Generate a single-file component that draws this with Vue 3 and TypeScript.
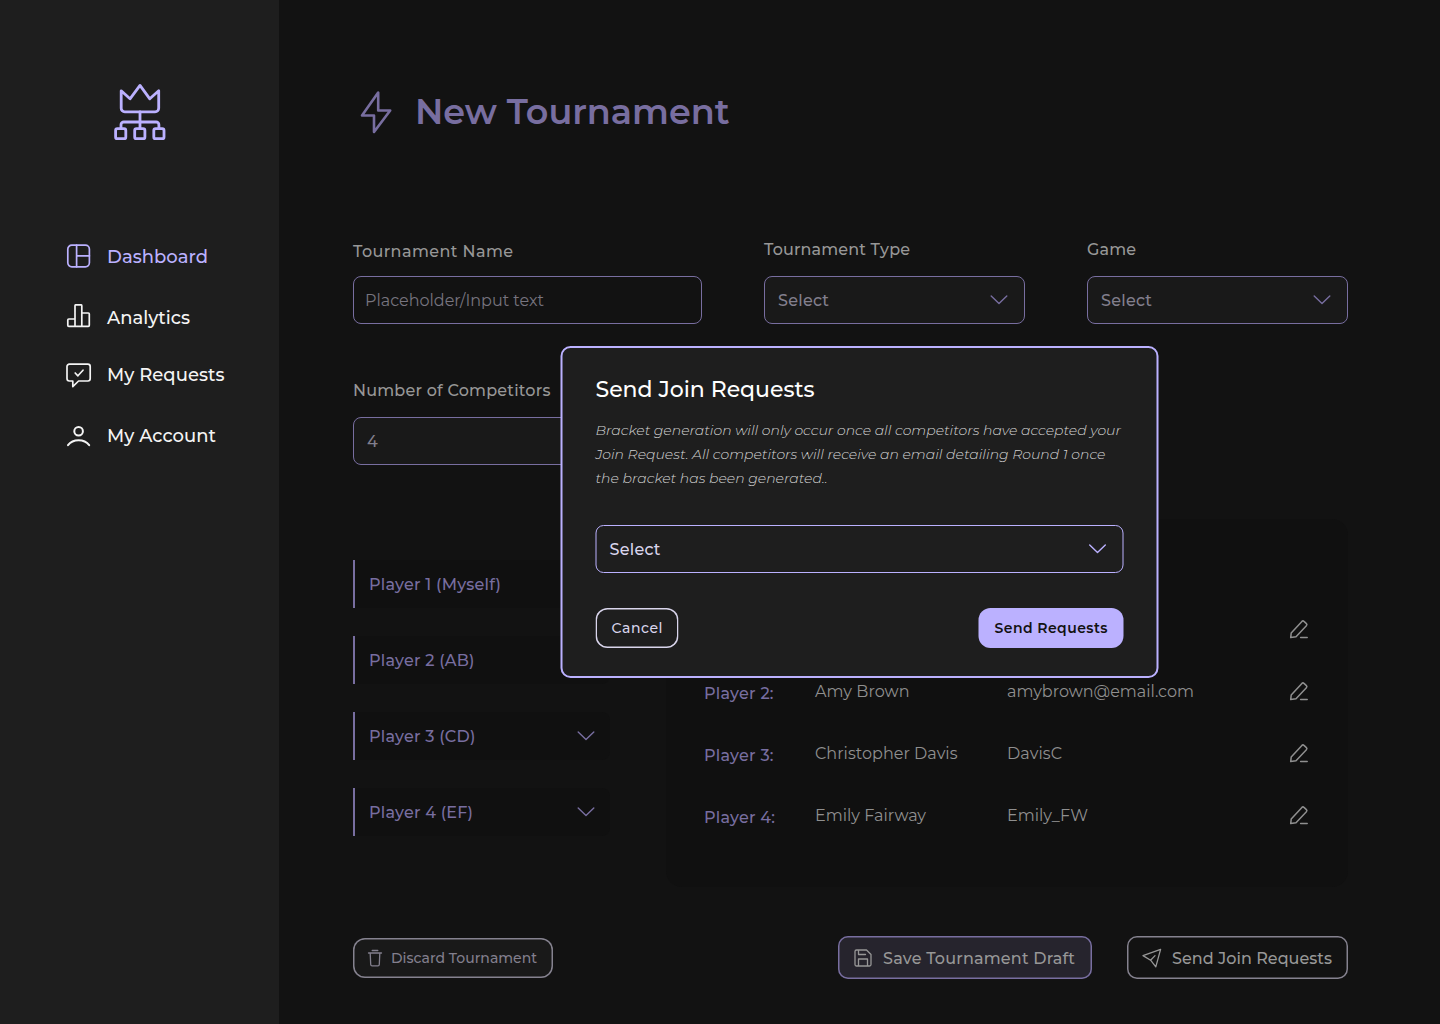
<script setup lang="ts">
import type { Directive } from 'vue'

interface Player {
  tab: string
  tabWidth: number
  label: string
  labelWidth: number
  name: string
  nameWidth: number
  contact: string
  contactWidth: number
}

const nav = [
  { id: 'dashboard', text: 'Dashboard', width: 101 },
  { id: 'analytics', text: 'Analytics', width: 83 },
  { id: 'requests', text: 'My Requests', width: 117.5 },
  { id: 'account', text: 'My Account', width: 109 },
]

const players: Player[] = [
  { tab: 'Player 1 (Myself)', tabWidth: 132, label: 'Player 1:', labelWidth: 67, name: '', nameWidth: 0, contact: '', contactWidth: 0 },
  { tab: 'Player 2 (AB)', tabWidth: 105.5, label: 'Player 2:', labelWidth: 69.5, name: 'Amy Brown', nameWidth: 94.5, contact: 'amybrown@email.com', contactWidth: 187 },
  { tab: 'Player 3 (CD)', tabWidth: 106.5, label: 'Player 3:', labelWidth: 69.5, name: 'Christopher Davis', nameWidth: 142.5, contact: 'DavisC', contactWidth: 55 },
  { tab: 'Player 4 (EF)', tabWidth: 104, label: 'Player 4:', labelWidth: 71, name: 'Emily Fairway', nameWidth: 111, contact: 'Emily_FW', contactWidth: 81 },
]

const note = [
  { text: 'Bracket generation will only occur once all competitors have accepted your', width: 525.5 },
  { text: 'Join Request. All competitors will receive an email detailing Round 1 once', width: 510 },
  { text: 'the bracket has been generated..', width: 232 },
]

/* Tracks a single line of text out to the given width in pixels. */
const vTrack: Directive<HTMLElement, number> = {
  mounted(el, { value }) {
    const length = (el.textContent ?? '').trim().length
    if (!value || length < 2) return
    const range = document.createRange()
    range.selectNodeContents(el)
    const natural = range.getBoundingClientRect().width
    el.style.letterSpacing = `${((value - natural) / (length - 1)).toFixed(3)}px`
  },
}
</script>

<template>
  <div class="app">
    <aside class="sidebar">
      <svg class="logo" viewBox="0 0 60 64" fill="none" stroke="currentColor" stroke-width="2.8" stroke-linejoin="round" stroke-linecap="round">
        <path d="M11.2 10.8 20 18.8 30 5.400 39.800 18.800 48.700 10.800V28.200a3.600 3.600 0 0 1-3.600 3.600H14.800a3.600 3.600 0 0 1-3.600-3.600Z" />
        <path d="M30 31.800V48M11 48v-3.200a2.800 2.800 0 0 1 2.800-2.800h32.300a2.800 2.800 0 0 1 2.800 2.800V48" />
        <rect x="5.600" y="48.700" width="10.200" height="10" rx="1.800" />
        <rect x="24.700" y="48.700" width="10.200" height="10" rx="1.800" />
        <rect x="43.800" y="48.700" width="10.200" height="10" rx="1.800" />
      </svg>
      <nav class="nav">
        <a v-for="item in nav" :key="item.id" class="nav-item" :class="item.id">
          <svg viewBox="0 0 28 28" fill="none" stroke="currentColor" stroke-width="1.700" stroke-linejoin="round" stroke-linecap="round">
            <template v-if="item.id === 'dashboard'">
              <rect x="3.800" y="2.200" width="21.600" height="21.600" rx="4" />
              <path d="M12.600 2.200v21.600M12.600 12.800h12.800" />
            </template>
            <path v-else-if="item.id === 'analytics'" d="M11 22.300V1.800a1 1 0 0 1 1-1h4.800a1 1 0 0 1 1 1v20.500M11 15H4.800a1 1 0 0 0-1 1v5.300a1 1 0 0 0 1 1h19.500a1 1 0 0 0 1-1V10a1 1 0 0 0-1-1h-6.500" />
            <template v-else-if="item.id === 'requests'">
              <path d="M5.400 3.200h18.400a2.400 2.400 0 0 1 2.400 2.400v12a2.400 2.400 0 0 1-2.400 2.400h-9.200L8.800 25.600V20H5.400A2.400 2.400 0 0 1 3 17.600V5.600A2.400 2.400 0 0 1 5.400 3.200Z" />
              <path d="m11.200 12 2.700 2.800L19 9.200" />
            </template>
            <template v-else>
              <circle cx="14.600" cy="9.200" r="4.300" stroke-width="2" />
              <path d="M4 23.200c5-6.600 16.200-6.600 21.200 0" stroke-width="2" />
            </template>
          </svg>
          <span v-track="item.width">{{ item.text }}</span>
        </a>
      </nav>
    </aside>

    <main class="main">
      <header class="heading">
        <svg viewBox="0 0 40 52" fill="none" stroke="currentColor" stroke-width="2.600" stroke-linejoin="round">
          <path d="M22.200 6.500v18h12L18 46V29.500H6L22.200 6.500Z" />
        </svg>
        <h1 v-track="314.5">New Tournament</h1>
      </header>

      <section class="fields">
        <label class="field lower">
          <span v-track="160" class="caption">Tournament Name</span>
          <span class="control plain"><span v-track="179">Placeholder/Input text</span></span>
        </label>
        <label class="field">
          <span v-track="146" class="caption">Tournament Type</span>
          <span class="control">
            <span v-track="51">Select</span>
            <svg class="chevron" viewBox="0 0 18 10"><path d="m1.200 1 7.800 7.600L16.800 1" /></svg>
          </span>
        </label>
        <label class="field">
          <span v-track="49" class="caption">Game</span>
          <span class="control">
            <span v-track="51">Select</span>
            <svg class="chevron" viewBox="0 0 18 10"><path d="m1.200 1 7.800 7.600L16.800 1" /></svg>
          </span>
        </label>
        <label class="field">
          <span v-track="197.5" class="caption">Number of Competitors</span>
          <span class="control"><span>4</span></span>
        </label>
      </section>

      <section class="roster">
        <div class="tabs">
          <div v-for="player in players" :key="player.tab" class="tab">
            <span v-track="player.tabWidth">{{ player.tab }}</span>
            <svg class="chevron" viewBox="0 0 18 10"><path d="m1.200 1 7.800 7.600L16.800 1" /></svg>
          </div>
        </div>
        <div class="card">
          <div v-for="player in players" :key="player.label" class="row">
            <span class="who"><span v-track="player.labelWidth">{{ player.label }}</span></span>
            <span class="name"><span v-track="player.nameWidth">{{ player.name }}</span></span>
            <span class="contact"><span v-track="player.contactWidth">{{ player.contact }}</span></span>
            <svg class="edit" viewBox="0 0 20 20" fill="none" stroke="currentColor" stroke-width="1.500" stroke-linejoin="round" stroke-linecap="round">
              <path d="M1.700 18.600 2.200 14.100 12.900 2.400a1.500 1.500 0 0 1 2.100 0L17.400 4.600a1.500 1.500 0 0 1 0 2.100L7 17.700 1.700 18.600ZM11.600 18.400h6.600" />
            </svg>
          </div>
        </div>
      </section>

      <footer class="actions">
        <button class="btn discard">
          <svg viewBox="0 0 20 20"><path d="M3.500 5h13M7.200 2.500h5.600M5.200 5.200l.5 11.300a1.400 1.400 0 0 0 1.400 1.300h5.800a1.400 1.400 0 0 0 1.400-1.300l.5-11.300" /></svg>
          <span v-track="146">Discard Tournament</span>
        </button>
        <button class="btn save">
          <svg viewBox="0 0 20 20"><path d="M2 3.500A1.500 1.500 0 0 1 3.500 2h10L18 6.500v10a1.500 1.500 0 0 1-1.500 1.500h-13A1.500 1.500 0 0 1 2 16.500ZM5.500 2v4.500h7M5.500 18v-7h9v7" /></svg>
          <span v-track="192">Save Tournament Draft</span>
        </button>
        <button class="btn send">
          <svg viewBox="0 0 20 20"><path d="M18.600 1.400 1 7.600 8.600 12.200 13.800 18.800 18.600 1.400ZM8.600 12.200 13 7.600" /></svg>
          <span v-track="160">Send Join Requests</span>
        </button>
      </footer>
    </main>

    <div class="modal" role="dialog">
      <h2><span v-track="219">Send Join Requests</span></h2>
      <p class="note">
        <span v-for="line in note" :key="line.text" class="note-line"><span v-track="line.width">{{ line.text }}</span></span>
      </p>
      <div class="control bright">
        <span v-track="51">Select</span>
        <svg class="chevron" viewBox="0 0 18 10"><path d="m1.200 1 7.800 7.600L16.800 1" /></svg>
      </div>
      <div class="modal-actions">
        <button class="btn cancel"><span v-track="51">Cancel</span></button>
        <button class="btn confirm"><span v-track="113">Send Requests</span></button>
      </div>
    </div>
  </div>
</template>

<style>
body {
  margin: 0;
  background: #121212;
}
</style>

<style scoped>
.app {
  position: relative;
  display: flex;
  width: 1440px;
  height: 1024px;
  overflow: hidden;
  background: #121212;
  font-family: Montserrat, Inter, sans-serif;
  font-size: 16px;
  white-space: nowrap;
}
.app *,
.app {
  box-sizing: border-box;
}
svg {
  flex: none;
  display: block;
}
h1,
h2,
p {
  margin: 0;
}

.sidebar {
  width: 279px;
  flex: none;
  padding-top: 80px;
  background: #1e1e1e;
}
.logo {
  width: 60px;
  height: 64px;
  margin-left: 110px;
  color: #bbb1ff;
}
.nav {
  display: flex;
  flex-direction: column;
  gap: 33px;
  padding: 99px 0 0 64px;
}
.nav-item {
  display: flex;
  align-items: center;
  gap: 15px;
  height: 28px;
  color: #f4f4f4;
  font-size: 18px;
  font-weight: 500;
}
.nav-item.dashboard {
  color: #bbb1ff;
}
.nav-item.requests {
  margin-top: -4px;
}
.nav-item svg {
  width: 28px;
  height: 28px;
}

.main {
  width: 995px;
  margin-left: 74px;
  display: flex;
  flex-direction: column;
}
.heading {
  display: flex;
  align-items: center;
  height: 52px;
  margin-top: 86px;
  padding-left: 3px;
  gap: 19px;
  color: #786ea0;
}
.heading svg {
  width: 40px;
  height: 52px;
}
h1 {
  font-size: 35px;
  font-weight: 600;
  line-height: 52px;
}

.fields {
  display: grid;
  grid-template-columns: 349px 261px 261px;
  column-gap: 62px;
  row-gap: 53px;
  margin-top: 98px;
}
.field {
  display: flex;
  flex-direction: column;
  align-items: flex-start;
  height: 88px;
}
.caption {
  height: 40px;
  line-height: 27px;
  color: #979797;
  font-weight: 500;
}
.lower .caption {
  line-height: 31px;
}
.control {
  display: flex;
  align-items: center;
  justify-content: space-between;
  width: 100%;
  height: 48px;
  padding: 0 16px 0 13px;
  border: 1px solid #786ea0;
  border-radius: 8px;
  background: #191919;
  color: #827f8d;
  font-weight: 500;
}
.control.plain {
  padding-left: 11px;
  background: transparent;
  color: #77747f;
  font-weight: 400;
}
.chevron {
  width: 18px;
  height: 10px;
  fill: none;
  stroke: #786ea0;
  stroke-width: 1.400;
  stroke-linecap: round;
  stroke-linejoin: round;
}

.roster {
  display: flex;
  margin-top: 54px;
  height: 368px;
}
.tabs {
  display: flex;
  flex-direction: column;
  gap: 28px;
  width: 257px;
  padding-top: 41px;
}
.tab {
  display: flex;
  align-items: center;
  justify-content: space-between;
  height: 48px;
  padding: 0 15px 0 14px;
  border-left: 2px solid #786ea0;
  border-radius: 0 8px 8px 0;
  background: #101010;
  color: #786ea0;
  font-weight: 500;
}
.card {
  width: 682px;
  margin-left: 56px;
  padding: 79px 38px 0;
  border-radius: 16px;
  background: #101010;
}
.row {
  display: flex;
  align-items: center;
  height: 62px;
  color: #8f8f8f;
  font-weight: 400;
}
.who {
  width: 111px;
  padding-top: 4px;
  color: #786ea0;
  font-weight: 500;
}
.name {
  width: 192px;
}
.contact {
  width: 282px;
}
.edit {
  width: 20px;
  height: 20px;
}

.actions {
  display: flex;
  align-items: center;
  margin-top: 49px;
  height: 43px;
}
.btn {
  display: flex;
  align-items: center;
  padding: 0 0 0 15px;
  border: 0;
  border-radius: 12px;
  background: transparent;
  box-shadow: inset 0 0 0 1.500px #85828f;
  color: #979797;
  font: 500 16px Montserrat, Inter, sans-serif;
}
.btn svg {
  width: 20px;
  height: 20px;
  fill: none;
  stroke: currentColor;
  stroke-width: 1.300;
  stroke-linejoin: round;
  stroke-linecap: round;
}
.discard {
  width: 200px;
  height: 40px;
  padding-left: 12px;
  gap: 6px;
  background: #191919;
  color: #827f8d;
  font-size: 14px;
}
.save,
.send {
  height: 43px;
  border-radius: 10px;
  gap: 10px;
}
.save span,
.send span {
  padding-top: 1px;
}
.save {
  width: 254px;
  margin-left: 285px;
  box-shadow: inset 0 0 0 1.500px #786ea0;
  background: #26242d;
}
.send {
  width: 221px;
  margin-left: 35px;
}

.modal {
  position: absolute;
  left: 560px;
  top: 346px;
  width: 598px;
  height: 332px;
  padding: 24px 33px 0;
  border: 2px solid #bbb1ff;
  border-radius: 10px;
  background: #1e1e1e;
  transform: translateX(0.500px);
}
h2 {
  height: 34px;
  color: #fff;
  font-size: 22px;
  font-weight: 500;
  line-height: 36px;
}
.note {
  display: flex;
  flex-direction: column;
  margin-top: 12px;
  color: #d2d2d2;
  font-size: 14px;
  font-style: italic;
  font-weight: 300;
}
.note-line {
  height: 24px;
  line-height: 24px;
}
.control.bright {
  margin-top: 35px;
  border-color: #bbb1ff;
  background: transparent;
  color: #d9d5ec;
}
.bright .chevron {
  stroke: #bbb1ff;
}
.modal-actions {
  display: flex;
  justify-content: space-between;
  margin-top: 35px;
}
.cancel,
.confirm {
  height: 40px;
  padding-left: 16px;
  font-size: 14px;
}
.cancel {
  width: 83px;
  box-shadow: inset 0 0 0 1.500px #d9d5ec;
  color: #d9d5ec;
}
.confirm {
  width: 145px;
  box-shadow: none;
  background: #bbb1ff;
  color: #121212;
  font-weight: 600;
}
</style>
